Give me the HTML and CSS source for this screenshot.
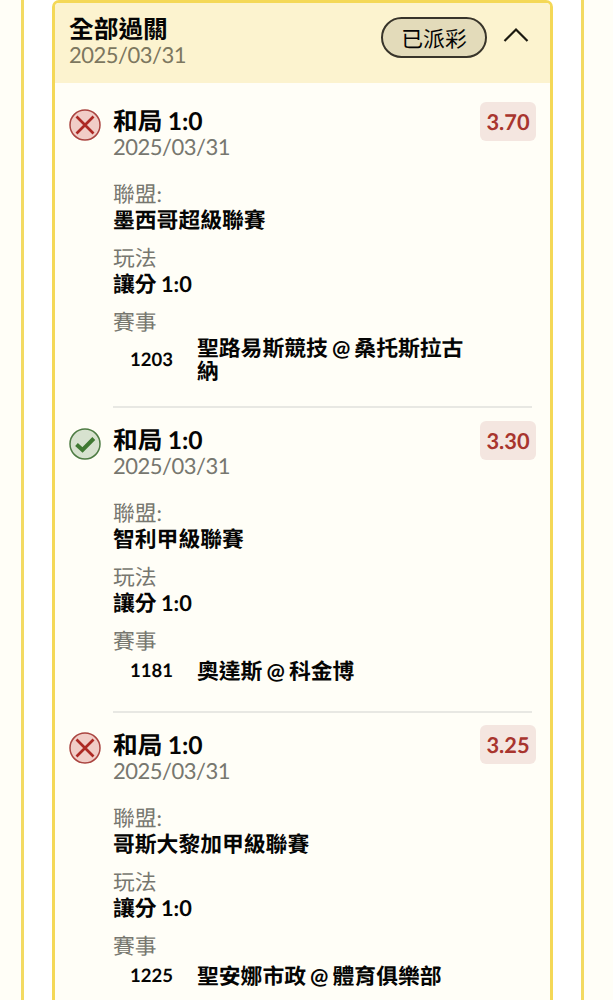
FILE: index.html
```html
<!DOCTYPE html>
<html lang="zh-Hant">
<head>
  <meta charset="UTF-8">
  <meta name="viewport" content="width=device-width, initial-scale=1.0">
  <title>全部過關</title>
  <link rel="stylesheet" href="styles.css">
</head>
<body>
  <div class="panel">
    <div class="card">
      <div class="card-header">
        <div>
          <h2 class="title">全部過關</h2>
          <div class="date">2025/03/31</div>
        </div>
        <span class="status">已派彩</span>
        <svg class="arrow" viewBox="0 0 26 16"><path d="M1.5 14 13 2.5 24.5 14"/></svg>
      </div>

      <div class="bets">
        <div class="bet">
          <svg class="icon lost" viewBox="0 0 32 32"><circle cx="16" cy="16" r="15"/><path d="M7.5 7.5 24.5 24.5M24.5 7.5 7.5 24.5"/></svg>
          <div class="bet-body">
            <div class="bet-top">
              <div>
                <h3 class="title">和局 1:0</h3>
                <div class="date">2025/03/31</div>
              </div>
              <span class="odds">3.70</span>
            </div>
            <div class="label">聯盟:</div>
            <div class="value">墨西哥超級聯賽</div>
            <div class="label">玩法</div>
            <div class="value">讓分 1:0</div>
            <div class="label">賽事</div>
            <div class="match"><span class="number">1203</span><span class="teams">聖路易斯競技 @ 桑托斯拉古納</span></div>
          </div>
        </div>

        <div class="bet">
          <svg class="icon won" viewBox="0 0 32 32"><circle cx="16" cy="16" r="15"/><path d="M7.5 16.5 13.5 22 24.8 10.5"/></svg>
          <div class="bet-body">
            <div class="bet-top">
              <div>
                <h3 class="title">和局 1:0</h3>
                <div class="date">2025/03/31</div>
              </div>
              <span class="odds">3.30</span>
            </div>
            <div class="label">聯盟:</div>
            <div class="value">智利甲級聯賽</div>
            <div class="label">玩法</div>
            <div class="value">讓分 1:0</div>
            <div class="label">賽事</div>
            <div class="match"><span class="number">1181</span><span class="teams">奧達斯 @ 科金博</span></div>
          </div>
        </div>

        <div class="bet">
          <svg class="icon lost" viewBox="0 0 32 32"><circle cx="16" cy="16" r="15"/><path d="M7.5 7.5 24.5 24.5M24.5 7.5 7.5 24.5"/></svg>
          <div class="bet-body">
            <div class="bet-top">
              <div>
                <h3 class="title">和局 1:0</h3>
                <div class="date">2025/03/31</div>
              </div>
              <span class="odds">3.25</span>
            </div>
            <div class="label">聯盟:</div>
            <div class="value">哥斯大黎加甲級聯賽</div>
            <div class="label">玩法</div>
            <div class="value">讓分 1:0</div>
            <div class="label">賽事</div>
            <div class="match"><span class="number">1225</span><span class="teams">聖安娜市政 @ 體育俱樂部</span></div>
          </div>
        </div>
      </div>
    </div>
  </div>
</body>
</html>
```
FILE: styles.css
```css
* { box-sizing: border-box; }

body {
  margin: 0;
  height: 1000px;
  overflow: hidden;
  background-color: #fffef7;
  color: #050504;
  font-family: Lato, "Noto Sans CJK TC", sans-serif;
  font-size: 21.8px;
  line-height: 26px;
  text-rendering: geometricPrecision;
}

.panel {
  height: 1000px;
  margin: 0 29px 0 21px;
  padding: 0 28px;
  border: solid #f3da62;
  border-width: 0 3px;
  background-color: #fff;
}

.card {
  height: 1040px;
  border: 3px solid #f4d857;
  border-radius: 7px;
  background-color: #fffef7;
  overflow: hidden;
}

.card-header {
  display: flex;
  align-items: flex-start;
  height: 79.5px;
  padding: 13px 21px 0 14px;
  background-color: #fcf3cf;
}

.title {
  margin: 0;
  font-size: 24.7px;
  font-weight: bold;
  line-height: 27px;
  word-spacing: -0.7px;
}

.date {
  color: #77776f;
  font-size: 22px;
  letter-spacing: -0.5px;
  line-height: 24px;
}
.card-header .date { color: #7c775f; }

.status {
  width: 106px;
  height: 41px;
  margin: 1px 16px 0 auto;
  border: 2px solid #38342a;
  border-radius: 21px;
  background-color: #e3dbba;
  line-height: 39px;
  text-align: center;
}

.arrow {
  width: 26px;
  height: 16px;
  margin-top: 11px;
  fill: none;
  stroke: #1b1910;
  stroke-width: 2.2;
}

/* Apuestas */
.bets { padding: 6.5px 18px 0 14px; }

.bet {
  display: flex;
  gap: 12px;
}

.icon {
  flex: none;
  width: 32px;
  height: 32px;
  margin-top: 19.5px;
}

.icon circle { stroke-width: 1.5; }
.icon path { fill: none; }
.lost circle { fill: #f1cdc7; stroke: #aa4440; }
.lost path { stroke: #ad2924; stroke-width: 2.7; }
.won circle { fill: #d7e2cf; stroke: #4d7b43; }
.won path { stroke: #3f7932; stroke-width: 4; }

.bet-body {
  flex: 1;
  padding: 19px 0 24.4px;
  border-bottom: 2px solid #e8e8e3;
}

.bet-top {
  display: flex;
  justify-content: space-between;
  margin: 0 -4px 22px 0;
}

.odds {
  width: 56px;
  height: 39px;
  margin-top: -6.4px;
  border-radius: 6px;
  background-color: #f4e6e0;
  color: #a8352e;
  font-weight: bold;
  line-height: 40px;
  text-align: center;
}

.label { color: #77776f; }

.value {
  margin-bottom: 12px;
  font-weight: bold;
  word-spacing: -1px;
}

.match {
  display: flex;
  align-items: center;
  min-height: 31px;
  margin-top: 1px;
  padding: 0 66px 0 17px;
  font-weight: bold;
  line-height: 23px;
}

.number {
  flex: none;
  width: 67px;
  font-size: 18.5px;
}

.teams { word-spacing: -1.2px; }
```
